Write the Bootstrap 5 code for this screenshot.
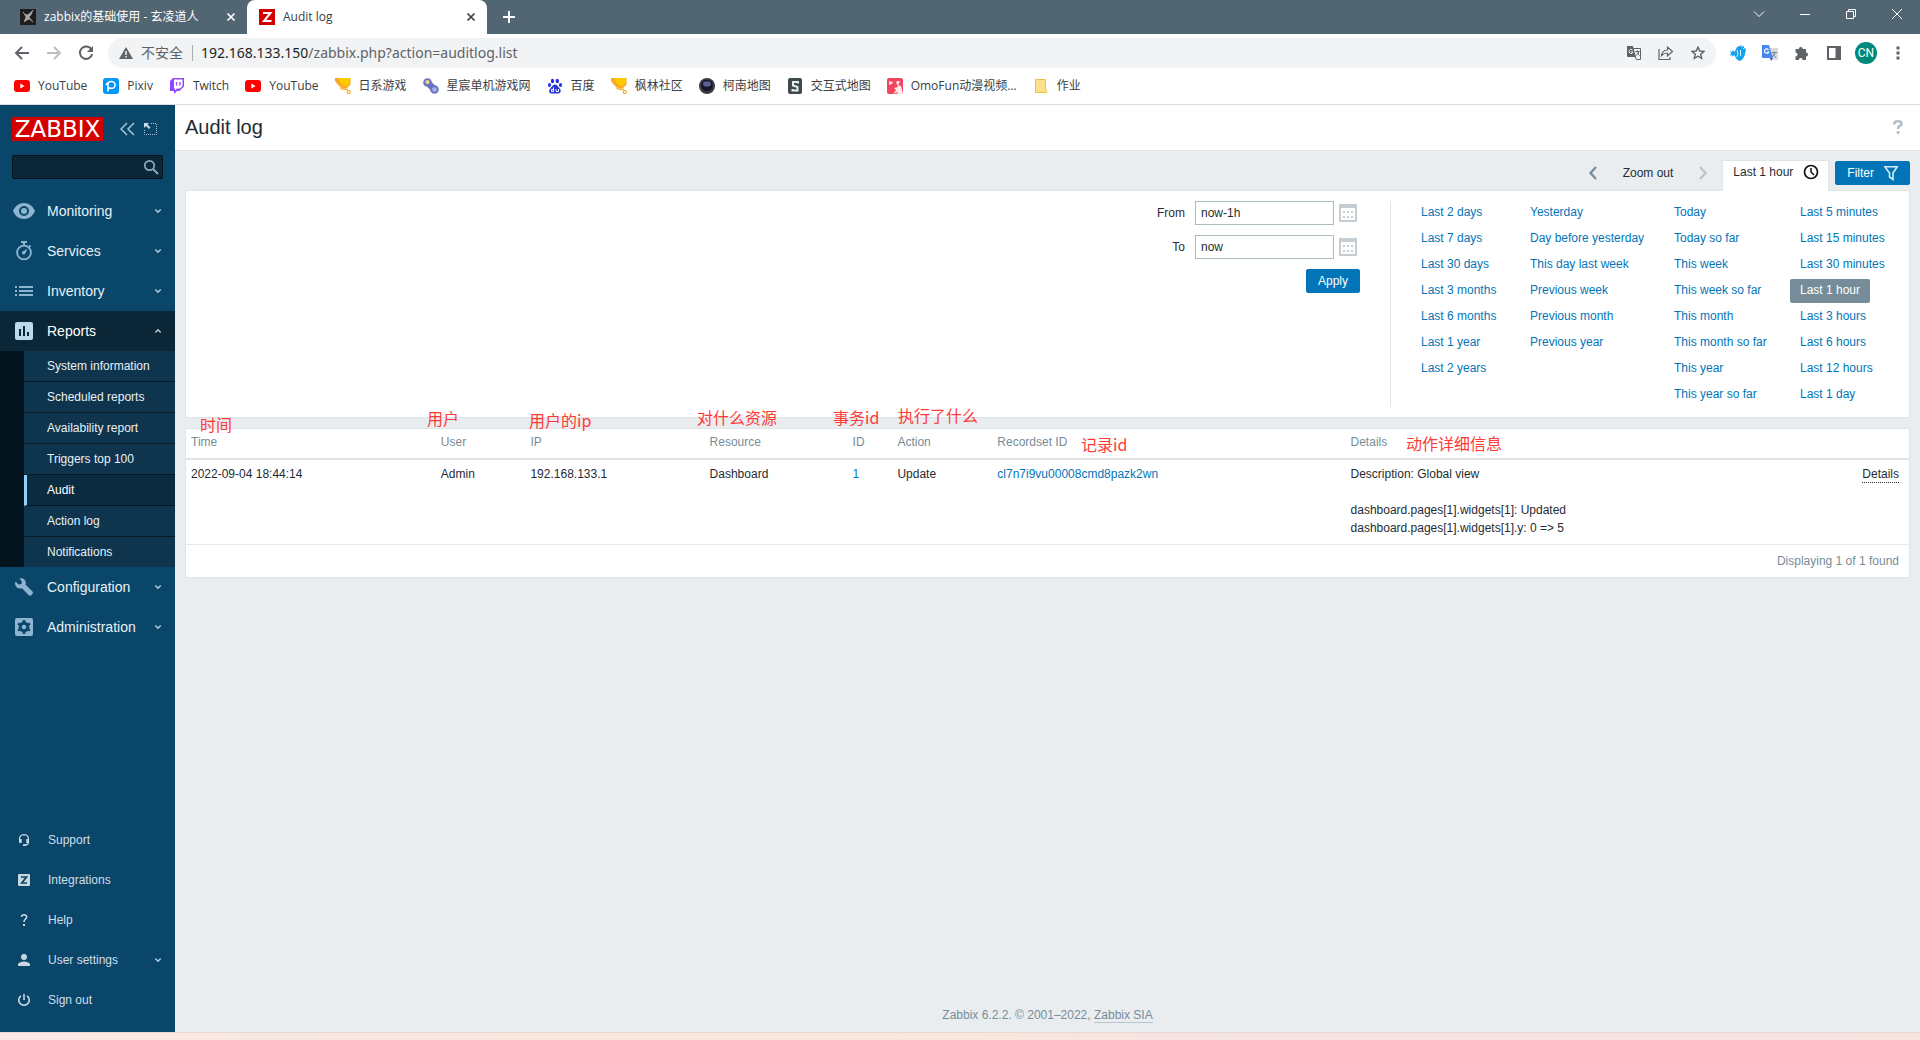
<!DOCTYPE html>
<html lang="en">
<head>
<meta charset="utf-8">
<meta name="viewport" content="width=device-width, initial-scale=1">
<title>Audit log</title>
<link href="https://cdn.jsdelivr.net/npm/bootstrap@5.3.0/dist/css/bootstrap.min.css" rel="stylesheet">
<style>
body{font-family:"Liberation Sans","Noto Sans CJK SC",sans-serif;font-size:12px;line-height:18px;color:#1f2c33;background:#e9edf0}
button{border:0;background:none;padding:0;color:inherit}
svg{display:block;flex:none}
a{text-decoration:none;color:#0275b8}
/* browser frame */
.chrome{font-family:"Open Sans","Noto Sans CJK SC",sans-serif;color:#3c4043;background:#fff;border-bottom:1px solid #dadce0}
.tabstrip{height:34px;background:#516672;color:#fff}
.tab-item{height:34px;padding:0 11px 0 12px;gap:8px}
.tab-idle{width:239px;margin-left:8px}
.tab-active{width:240px;background:#fff;color:#3c4043;border-radius:8px 8px 0 0}
.new-tab{padding:0 0 0 14px}
.window-ctl{width:46px;height:28px}
.toolbar{height:38px;padding:0 6px}
.tool-btn{width:32px;height:32px}
.omnibox{height:30px;margin:0 6px;padding:0 2px 0 11px;border-radius:15px;background:#f1f3f4;font-family:"Noto Sans","Noto Sans CJK SC",sans-serif;font-size:14px;color:#5f6368}
.omni-sep{width:1px;height:16px;background:#a9adb1;margin:0 8px 0 9px}
.avatar-dot{width:22px;height:22px;border-radius:50%;background:#00897b;color:#fff;font:12px Roboto,sans-serif}
.bookmarks{height:32px;padding:0 14px 4px;gap:16px}
.bookmarks a{color:#3c4043;gap:8px}
/* sidebar */
.sidebar{width:175px;background:#0a466a;color:#e6eef3}
.brand{padding:12px 17px 0 12px;gap:17px}
.logo{width:91px;height:24px;background:#d40000;color:#fff;font:23px/24px "DejaVu Sans",sans-serif;text-align:center}
.search-box{margin:14px 12px 12px;height:24px;background:#0a2637;border:1px solid #04121b;border-radius:2px;padding:0 3px 0 6px}
.search-box input{background:none;border:0;min-width:0;color:#fff;outline:0}
.side-link{height:40px;padding:0 13px 0 12px;font-size:14px;color:#e8f1f6}
.side-link .ico{width:24px;margin-right:11px;color:#8eb5d0}
.side-link.open{background:#0a2637;color:#fff}
.side-link.open .ico{color:#bcd9ec}
.side-link .chev{color:#b5ccd9}
.side-foot .side-link{font-size:12px;color:#d0dfe7}
.side-foot .ico{margin-right:12px;color:#c7d8e1}
.side-foot{padding-bottom:12px}
.submenu{background:#04141e;padding-left:24px}
.submenu a{height:31px;line-height:30px;padding-left:23px;color:#e8f1f6;background:#0f344d;border-bottom:1px solid #051925}
.submenu a.on{background:#0a2b40;border-left:3px solid #90d0ff;padding-left:20px;color:#fff}
.submenu a:last-child{height:30px;border-bottom:0}
/* content */
.page-head{height:46px;padding:0 16px 2px 10px;border-bottom:1px solid #dfe4e7;background:#fff}
.page-head h1{font-size:20px;line-height:24px;font-weight:400;margin:0}
.work{padding:9px 10px 0}
.pager{height:30px;padding-bottom:4px;gap:25px;margin-right:14px}
.time-tab{height:31px;width:107px;padding:0 9px 8px 10px;background:#fff;border:1px solid #dfe4e7;border-bottom:0;margin-bottom:-1px;position:relative;z-index:1}
.filter-btn{margin:1px 0 0 6px;gap:10px}
.btn-z{height:24px;line-height:22px;padding:0 11px;font-size:12px;border-radius:2px;color:#fff;background:#0275b8;border:1px solid #0275b8}
.btn-z:hover{color:#fff;background:#02659f}
.panel{background:#fff;border:1px solid #dfe4e7}
.filter-panel{padding:10px;gap:20px}
.range-form{padding-right:30px;border-right:1px solid #dfe4e7}
.range-row{gap:5px;margin-bottom:10px}
.range-row label{margin-right:5px}
.range-row input{width:139px;height:24px;border:1px solid #acbbc2;padding:0 5px;color:#1f2c33}
.range-row button{width:21px}
.quick-grid{display:grid;grid-template-columns:109px 144px 126px 109px;white-space:nowrap}
.quick{gap:2px}
.quick a{height:24px;line-height:23px;padding:0 10px;border-radius:2px}
.quick a.on{background:#768d99;color:#fff}
.audit{margin-top:10px;position:relative}
.audit table{table-layout:fixed;width:100%;border-collapse:separate;border-spacing:0}
.audit th{font-weight:400;color:#768d99;padding:4px 5px 7px;height:31px;border-bottom:2px solid #dfe4e7}
.audit td{padding:5px 5px 7px;height:85px;vertical-align:top;border-bottom:1px solid #e5e9ec}
.audit th:last-child,.audit td:last-child{padding-right:10px;text-align:right}
.details-btn{border-bottom:1px dotted #1f2c33;line-height:15px}
.found{padding:7px 10px;color:#768d99;text-align:right}
.note{position:absolute;font:16px/20px "Noto Sans CJK SC",sans-serif;color:#ff3b38;white-space:nowrap}
.page-foot{color:#768d99;padding-bottom:8px}
.page-foot a{color:#768d99;border-bottom:1px solid #b9c5cc}
.desk{height:8px;border-top:1px solid #e8d8d0;background:linear-gradient(90deg,#f8e7e4,#f8e8dc 48%,#f5e3e4 65%,#f7e4e1)}
</style>
</head>
<body class="d-flex flex-column min-vh-100">
<svg class="d-none">
<symbol id="i-yt" viewBox="0 0 16 16"><rect y="2" width="16" height="12" rx="3" fill="#f00"/><path d="M6.3 5.500v5L10.600 8z" fill="#fff"/></symbol>
<symbol id="i-cup" viewBox="0 0 16 16"><path d="M0 0h15.500v6.500L12 10q-1.500 1-3.500.5Q4 9 0 3z" fill="#f9a825"/><path d="M3.500 0h11v5.500L11 8.500Q6 8 3.500 0z" fill="#ffca00"/><path d="M5 9.500Q8 12.500 13 11" fill="none" stroke="#f7b84a" stroke-width="1.600"/><circle cx="13.700" cy="14" r="1.500" fill="none" stroke="#f9a825" stroke-width="1.200"/></symbol>
<symbol id="i-close" viewBox="0 0 10 10"><path d="M1.500 1.500l7 7m0-7l-7 7" stroke="currentColor" stroke-width="1.700"/></symbol>
<symbol id="i-down" viewBox="0 0 8 8"><path d="M1.300 2.500L4 5.200l2.700-2.700" fill="none" stroke="currentColor" stroke-width="1.500"/></symbol>
<symbol id="i-cal" viewBox="0 0 18 18"><path fill-rule="evenodd" d="M1 0h16a1 1 0 0 1 1 1v16a1 1 0 0 1-1 1H1a1 1 0 0 1-1-1V1a1 1 0 0 1 1-1zm1 4v12h14V4z" fill="#c3cdd2"/><path d="M4 7h2v2H4zm4 0h2v2H8zm4 0h2v2h-2zM4 12h2v2H4zm4 0h2v2H8zm4 0h2v2h-2z" fill="#c3cdd2"/></symbol>
</svg>

<header class="chrome">
  <div class="tabstrip d-flex">
    <div class="tab-item tab-idle d-flex align-items-center">
      <svg width="16" height="16" viewBox="0 0 16 16"><rect width="16" height="16" fill="#1d1d1d"/><path d="M3 3l3 3 3-1 4-4-2 5-2 2 4 5-4-3-5 3 2-5z" fill="#a9a9a9" stroke="#a9a9a9" stroke-width=".6"/></svg>
      <span class="flex-grow-1 text-nowrap">zabbix的基础使用 - 玄凌道人</span>
      <button aria-label="Close tab"><svg width="10" height="10"><use href="#i-close"/></svg></button>
    </div>
    <div class="tab-item tab-active d-flex align-items-center">
      <svg width="16" height="16" viewBox="0 0 16 16"><rect width="16" height="16" fill="#d40000"/><path d="M4 4h7.500L5 12h7.500" fill="none" stroke="#fff" stroke-width="2"/></svg>
      <span class="flex-grow-1">Audit log</span>
      <button aria-label="Close tab"><svg width="10" height="10"><use href="#i-close"/></svg></button>
    </div>
    <button class="new-tab" aria-label="New tab"><svg width="16" height="16" viewBox="0 0 16 16"><path d="M8 2v12M2 8h12" stroke="#fff" stroke-width="2"/></svg></button>
    <div class="ms-auto d-flex">
      <button class="window-ctl d-flex align-items-center justify-content-center" aria-label="Search tabs"><svg width="12" height="12" viewBox="0 0 12 12"><path d="M1 3.500l5 5 5-5" fill="none" stroke="#fff"/></svg></button>
      <button class="window-ctl d-flex align-items-center justify-content-center" aria-label="Minimize"><svg width="10" height="10" viewBox="0 0 10 10"><path d="M0 5.500h10" stroke="#fff"/></svg></button>
      <button class="window-ctl d-flex align-items-center justify-content-center" aria-label="Restore"><svg width="10" height="10" viewBox="0 0 10 10"><path d="M.5 2.500h7v7h-7zM2.500 2.500v-2h7v7h-2" fill="none" stroke="#fff"/></svg></button>
      <button class="window-ctl d-flex align-items-center justify-content-center" aria-label="Close"><svg width="10" height="10" viewBox="0 0 10 10"><path d="M0 0l10 10M10 0L0 10" stroke="#fff"/></svg></button>
    </div>
  </div>
  <div class="toolbar d-flex align-items-center">
    <button class="tool-btn d-flex align-items-center justify-content-center" aria-label="Back"><svg width="16" height="16" viewBox="0 0 16 16"><path d="M15 8H2m6-6L2 8l6 6" fill="none" stroke="#5f6368" stroke-width="1.900"/></svg></button>
    <button class="tool-btn d-flex align-items-center justify-content-center" aria-label="Forward"><svg width="16" height="16" viewBox="0 0 16 16"><path d="M1 8h13M8 2l6 6-6 6" fill="none" stroke="#bcbfc1" stroke-width="1.900"/></svg></button>
    <button class="tool-btn d-flex align-items-center justify-content-center" aria-label="Reload"><svg width="16" height="16" viewBox="0 0 16 16"><path d="M13.500 4.500A6.200 6.200 0 1 0 14.200 9" fill="none" stroke="#5f6368" stroke-width="2"/><path d="M15 1v6H9z" fill="#5f6368"/></svg></button>
    <div class="omnibox d-flex align-items-center flex-grow-1">
      <svg width="14" height="14" viewBox="0 0 14 14" class="me-2"><path d="M7 1l7 12H0z" fill="#5f6368"/><path d="M7 5v4m0 1v1.500" stroke="#f1f3f4" stroke-width="1.500"/></svg>
      <span>不安全</span><span class="omni-sep"></span>
      <span class="flex-grow-1"><span class="text-dark">192.168.133.150</span>/zabbix.php?action=auditlog.list</span>
      <button class="tool-btn d-flex align-items-center justify-content-center" aria-label="Translate"><svg width="14" height="14" viewBox="0 0 14 14"><path d="M0 0h6l3 11H1q-1 0-1-1z" fill="#5f6368"/><path d="M6.500 2.500h7v11H9.500L8 11" fill="none" stroke="#5f6368"/><path d="M5.500 4A2 2 0 1 0 6 6H4" fill="none" stroke="#f1f3f4"/><path d="M8.500 5.500h4m-2-1v1m1.500 0q-.5 2-3 4m1-3q1 2 2.500 3" fill="none" stroke="#5f6368"/></svg></button>
      <button class="tool-btn d-flex align-items-center justify-content-center" aria-label="Share"><svg width="16" height="16" viewBox="0 0 16 16"><path d="M1 4v10.500h11V12M3.500 10.500Q4.500 5 9.500 5V2l5 4.500-5 4.500V8Q6 8 3.500 10.500z" fill="none" stroke="#5f6368" stroke-width="1.200"/></svg></button>
      <button class="tool-btn d-flex align-items-center justify-content-center" aria-label="Bookmark"><svg width="14" height="14" viewBox="0 0 14 14"><path d="M7 1l1.700 4 4.300.4-3.300 2.800 1 4.200L7 10.200l-3.700 2.200 1-4.200L1 5.400 5.300 5z" fill="none" stroke="#5f6368" stroke-width="1.400"/></svg></button>
    </div>
    <button class="tool-btn d-flex align-items-center justify-content-center" aria-label="Fish extension"><svg width="16" height="16" viewBox="0 0 16 16"><path d="M0 6l2 1 1-2 1.500 2L7 2l5-2-1 2 3-1v2l2 1-1 5q-1 5-5 7-4-1-5-5l-1.500-1L3 12l-1-2-2 1 1-2.500z" fill="#17a2ef"/><path d="M7 5q2 3 0 7M10.500 5v6M13 3.500h1" stroke="#d4f0ff" fill="none"/></svg></button>
    <button class="tool-btn d-flex align-items-center justify-content-center" aria-label="Translate extension"><svg width="16" height="16" viewBox="0 0 16 16"><path d="M6 3h10v12h-5z" fill="#dcdcdc"/><path d="M0 0h7l4 13H1q-1 0-1-1z" fill="#4a86f0"/><path d="M8 13h3l-2 3z" fill="#2a57c8"/><path d="M6.500 4.800A2.200 2.200 0 1 0 6.800 7H5" fill="none" stroke="#fff" stroke-width="1.200"/><path d="M10 7.500h5m-3-1v1m1.500 0q-1 3-3 4m0-3q1 2 3.500 4" fill="none" stroke="#6f8796"/></svg></button>
    <button class="tool-btn d-flex align-items-center justify-content-center" aria-label="Extensions"><svg width="16" height="16" viewBox="0 0 16 16"><path d="M1.500 4h3.300a2 2 0 1 1 4 0H12v3.500a2 2 0 1 1 0 4V15H8.700a2 2 0 0 0-4 0H1.500v-3.500a2 2 0 0 0 0-4z" fill="#5f6368"/></svg></button>
    <button class="tool-btn d-flex align-items-center justify-content-center" aria-label="Side panel"><svg width="14" height="14" viewBox="0 0 14 14"><path fill-rule="evenodd" d="M0 0h14v14H0zm2 2v10h6.500V2z" fill="#5f6368"/></svg></button>
    <button class="tool-btn d-flex align-items-center justify-content-center" aria-label="Profile"><span class="avatar-dot d-flex align-items-center justify-content-center">CN</span></button>
    <button class="tool-btn d-flex align-items-center justify-content-center" aria-label="Menu"><svg width="4" height="14" viewBox="0 0 4 14"><path d="M.5 .5h3v3h-3zm0 5h3v3h-3zm0 5h3v3h-3z" fill="#5f6368"/></svg></button>
  </div>
  <nav class="bookmarks d-flex align-items-center text-nowrap">
    <a href="#" class="d-flex align-items-center"><svg width="16" height="16"><use href="#i-yt"/></svg>YouTube</a>
    <a href="#" class="d-flex align-items-center"><svg width="16" height="16" viewBox="0 0 16 16"><rect width="16" height="16" rx="3" fill="#0096fa"/><path d="M5 13.500V5m-2 2q2-3.500 5.500-3.500a3.500 3.300 0 0 1 0 6.800Q6.500 10.500 5 9.500" fill="none" stroke="#fff" stroke-width="1.600"/></svg>Pixiv</a>
    <a href="#" class="d-flex align-items-center"><svg width="16" height="16" viewBox="0 0 16 16"><path d="M4 0h11v8.500L10.500 13H8l-3 3v-3H1V3z" fill="#9146ff"/><path d="M5 1.500h8.500V8L11 10.500H8l-2 2v-2H5z" fill="#fff"/><path d="M7.500 4v3.500m3.500-3.500v3.500" stroke="#9146ff" stroke-width="1.300"/></svg>Twitch</a>
    <a href="#" class="d-flex align-items-center"><svg width="16" height="16"><use href="#i-yt"/></svg>YouTube</a>
    <a href="#" class="d-flex align-items-center"><svg width="16" height="16"><use href="#i-cup"/></svg>日系游戏</a>
    <a href="#" class="d-flex align-items-center"><svg width="16" height="16" viewBox="0 0 16 16"><path d="M4.500 4.500l7 7" stroke="#6570b8" stroke-width="6.500"/><circle cx="4.500" cy="4.500" r="4.300" fill="#6d76c4"/><circle cx="11.500" cy="11.500" r="4.300" fill="#6d76c4"/><circle cx="4.500" cy="4" r="2" fill="#f0d58a"/><circle cx="11.500" cy="11.500" r="2.200" fill="#a9b4ee"/></svg>星宸单机游戏网</a>
    <a href="#" class="d-flex align-items-center"><svg width="16" height="16" viewBox="0 0 16 16"><g fill="#2932e1"><ellipse cx="5.500" cy="3" rx="1.700" ry="2.300"/><ellipse cx="10.300" cy="3" rx="1.700" ry="2.300"/><ellipse cx="2.500" cy="7" rx="1.600" ry="2"/><ellipse cx="13.500" cy="7" rx="1.600" ry="2"/><path d="M8 6.500q2 0 3 2l2.500 3q1 4-3 4H5q-4 0-2.500-4L5 8.500q1-2 3-2z"/></g><path d="M6.500 9.500v4h-2v-2h2M9 11v2.500h2.500V11" fill="none" stroke="#fff"/></svg>百度</a>
    <a href="#" class="d-flex align-items-center"><svg width="16" height="16"><use href="#i-cup"/></svg>枫林社区</a>
    <a href="#" class="d-flex align-items-center"><svg width="16" height="16" viewBox="0 0 16 16"><circle cx="8" cy="8" r="8" fill="#3b3b42"/><circle cx="8" cy="7.500" r="5.800" fill="#15152e"/><ellipse cx="8" cy="6" rx="4" ry="2.800" fill="#5c5f92"/></svg>柯南地图</a>
    <a href="#" class="d-flex align-items-center"><svg width="16" height="16" viewBox="0 0 16 16"><rect x="1" width="14" height="16" rx="2" fill="#3f4a4d"/><path d="M11 5.500V4H6v3.500l4.500 1.500v3.500H5.500V11" fill="none" stroke="#e8eeee" stroke-width="2"/></svg>交互式地图</a>
    <a href="#" class="d-flex align-items-center"><svg width="16" height="16" viewBox="0 0 16 16"><rect width="16" height="16" rx="2" fill="#f5455c"/><path d="M2 3l4 1-1 2-3 1zM9 4q3-2 4 0l-2 3 3 1 2 8h-6l1-2-5 2 3-4-2-2 4-1z" fill="#ffe8ec"/></svg>OmoFun动漫视频...</a>
    <a href="#" class="d-flex align-items-center"><svg width="16" height="16" viewBox="0 0 16 16"><path d="M2.500 1.500h10v10l1 .5v2.500h-11z" fill="#ffe08a" stroke="#e8c44d"/></svg>作业</a>
  </nav>
</header>

<div class="d-flex flex-grow-1">
  <aside class="sidebar d-flex flex-column flex-shrink-0">
    <div class="brand d-flex align-items-center">
      <div class="logo">ZABBIX</div>
      <div class="d-flex gap-2 align-items-center">
        <button aria-label="Collapse sidebar"><svg width="15" height="14" viewBox="0 0 15 14"><path d="M7 1L1 7l6 6M14 1L8 7l6 6" fill="none" stroke="#a9c6d8" stroke-width="1.500"/></svg></button>
        <button aria-label="Hide sidebar"><svg width="14" height="14" viewBox="0 0 14 14"><path d="M8 1.500h5.500v11h-12V8" fill="none" stroke="#a9c6d8" stroke-dasharray="1 1"/><path d="M1 1h5L4.500 2.500l3 3-1.500 1.500-3-3L1 6z" fill="#c5dbe8"/></svg></button>
      </div>
    </div>
    <form class="search-box d-flex align-items-center">
      <input type="text" class="flex-grow-1" aria-label="Search">
      <button type="button" aria-label="Search"><svg width="16" height="16" viewBox="0 0 16 16"><circle cx="6.500" cy="6.500" r="4.700" fill="none" stroke="#8aaac0" stroke-width="1.700"/><path d="M10 10l5 5" stroke="#8aaac0" stroke-width="2"/></svg></button>
    </form>
    <nav>
      <a href="#" class="side-link d-flex align-items-center"><span class="ico d-flex justify-content-center"><svg width="22" height="16" viewBox="0 0 22 16"><path fill-rule="evenodd" d="M11 0c5 0 9 3 11 8-2 5-6 8-11 8S2 13 0 8c2-5 6-8 11-8zm0 3a5 5 0 1 0 0 10 5 5 0 0 0 0-10z" fill="currentColor"/><circle cx="11" cy="8" r="3" fill="currentColor"/></svg></span><span class="flex-grow-1">Monitoring</span><svg class="chev" width="8" height="8"><use href="#i-down"/></svg></a>
      <a href="#" class="side-link d-flex align-items-center"><span class="ico d-flex justify-content-center"><svg width="18" height="20" viewBox="0 0 18 20"><circle cx="9" cy="11.500" r="6.900" fill="none" stroke="currentColor" stroke-width="1.800"/><path d="M6 1h6M9 1v3m5 .5l1.500 1.500" stroke="currentColor" stroke-width="1.900"/><path d="M12.500 8l-2.300 4.500a1.700 1.700 0 1 1-2.200-2.200z" fill="currentColor"/></svg></span><span class="flex-grow-1">Services</span><svg class="chev" width="8" height="8"><use href="#i-down"/></svg></a>
      <a href="#" class="side-link d-flex align-items-center"><span class="ico d-flex justify-content-center"><svg width="18" height="12" viewBox="0 0 18 12"><path d="M0 1h2v2H0zm4 0h14v2H4zM0 5h2v2H0zm4 0h14v2H4zM0 9h2v2H0zm4 0h14v2H4z" fill="currentColor"/></svg></span><span class="flex-grow-1">Inventory</span><svg class="chev" width="8" height="8"><use href="#i-down"/></svg></a>
      <a href="#" class="side-link open d-flex align-items-center"><span class="ico d-flex justify-content-center"><svg width="18" height="18" viewBox="0 0 18 18"><rect width="18" height="18" rx="2" fill="currentColor"/><path d="M5 7v7m4-10v10m4-4v4" stroke="#0a2637" stroke-width="2"/></svg></span><span class="flex-grow-1">Reports</span><svg class="chev" width="8" height="8" viewBox="0 0 8 8"><path d="M1.300 5.500L4 2.800l2.700 2.700" fill="none" stroke="currentColor" stroke-width="1.500"/></svg></a>
      <div class="submenu">
        <a href="#" class="d-block">System information</a>
        <a href="#" class="d-block">Scheduled reports</a>
        <a href="#" class="d-block">Availability report</a>
        <a href="#" class="d-block">Triggers top 100</a>
        <a href="#" class="d-block on">Audit</a>
        <a href="#" class="d-block">Action log</a>
        <a href="#" class="d-block">Notifications</a>
      </div>
      <a href="#" class="side-link d-flex align-items-center"><span class="ico d-flex justify-content-center"><svg width="18" height="18" viewBox="0 0 18 18"><path d="M4.500 0.500Q9-.5 10.500 3.500q.5 1.500 0 3L18 14l-.5 2-1.500 1.500L14 17.500 7 10.200Q3 11.500 1 8.500-.5 6 .5 3.500l3 3L6.300 6l.7-2.500z" fill="currentColor"/></svg></span><span class="flex-grow-1">Configuration</span><svg class="chev" width="8" height="8"><use href="#i-down"/></svg></a>
      <a href="#" class="side-link d-flex align-items-center"><span class="ico d-flex justify-content-center"><svg width="18" height="18" viewBox="0 0 18 18"><rect width="18" height="18" rx="2" fill="currentColor"/><circle cx="9" cy="9" r="3.800" fill="none" stroke="#0a466a" stroke-width="3.200"/><path d="M9 2v14M3 5.500l12 7M3 12.500l12-7" stroke="#0a466a" stroke-width="2.600"/><circle cx="9" cy="9" r="2.300" fill="currentColor"/></svg></span><span class="flex-grow-1">Administration</span><svg class="chev" width="8" height="8"><use href="#i-down"/></svg></a>
    </nav>
    <nav class="side-foot mt-auto">
      <a href="#" class="side-link d-flex align-items-center"><span class="ico d-flex justify-content-center"><svg width="12" height="12" viewBox="0 0 12 12"><path d="M1.500 6V5q0-4 4.500-4.300Q10.500 1 10.500 5v3q0 3-4 3.200" fill="none" stroke="currentColor" stroke-width="1.200"/><path d="M1 5h2.700v4H2Q1 9 1 8zm7.300 0H11v4H8.300zM5 10.300h3V12H5z" fill="currentColor"/></svg></span>Support</a>
      <a href="#" class="side-link d-flex align-items-center"><span class="ico d-flex justify-content-center"><svg width="12" height="12" viewBox="0 0 12 12"><rect width="12" height="12" rx="1" fill="currentColor"/><path d="M3 3h5.500L3.800 9H9" fill="none" stroke="#0a466a" stroke-width="1.700"/></svg></span>Integrations</a>
      <a href="#" class="side-link d-flex align-items-center"><span class="ico d-flex justify-content-center"><svg width="12" height="12" viewBox="0 0 12 12"><path d="M3.500 3Q3.700.8 6 .8T8.700 3Q8.700 4.300 7.200 5.300 6 6 6 8" fill="none" stroke="currentColor" stroke-width="1.500"/><path d="M5 10h2v2H5z" fill="currentColor"/></svg></span>Help</a>
      <a href="#" class="side-link d-flex align-items-center"><span class="ico d-flex justify-content-center"><svg width="12" height="12" viewBox="0 0 12 12"><circle cx="6" cy="3" r="3" fill="currentColor"/><path d="M0 12v-2q1.500-2.500 6-2.500t6 2.500v2z" fill="currentColor"/></svg></span><span class="flex-grow-1">User settings</span><svg class="chev" width="8" height="8"><use href="#i-down"/></svg></a>
      <a href="#" class="side-link d-flex align-items-center"><span class="ico d-flex justify-content-center"><svg width="12" height="12" viewBox="0 0 12 12"><path d="M3 1.800a5.200 5.200 0 1 0 6 0M6 0v6" fill="none" stroke="currentColor" stroke-width="1.600"/></svg></span>Sign out</a>
    </nav>
  </aside>

  <main class="flex-grow-1 d-flex flex-column">
    <div class="page-head d-flex align-items-center justify-content-between">
      <h1>Audit log</h1>
      <a href="#" aria-label="Help"><svg width="12" height="14" viewBox="0 0 12 14"><path d="M2.500 4.500V3Q2.500 1.300 6 1.300T9.500 3.500Q9.500 5 7.500 6 6 6.700 6 9" fill="none" stroke="#b4c0c7" stroke-width="2.600"/><path d="M4.700 11h2.800v3H4.700z" fill="#b4c0c7"/></svg></a>
    </div>
    <div class="work">
      <div class="d-flex justify-content-end align-items-start">
        <div class="pager d-flex align-items-center">
          <button aria-label="Earlier"><svg width="10" height="14" viewBox="0 0 10 14"><path d="M8 1L2.500 7 8 13" fill="none" stroke="#768d99" stroke-width="2.300"/></svg></button>
          <button>Zoom out</button>
          <button aria-label="Later" disabled><svg width="10" height="14" viewBox="0 0 10 14"><path d="M2 1l5.500 6L2 13" fill="none" stroke="#b9c5cc" stroke-width="2.300"/></svg></button>
        </div>
        <a href="#" class="time-tab text-reset d-flex align-items-center justify-content-between">Last 1 hour<svg width="16" height="16" viewBox="0 0 16 16"><circle cx="8" cy="8" r="6.500" fill="none" stroke="#111" stroke-width="1.700"/><path d="M8 4v4l3 3" fill="none" stroke="#111" stroke-width="1.500"/></svg></a>
        <button class="btn-z filter-btn d-flex align-items-center">Filter<svg width="14" height="16" viewBox="0 0 14 16"><path d="M.8 1.800h12.400L9 8v6.500L5.500 12V8z" fill="none" stroke="#d8eaf5" stroke-width="1.600"/></svg></button>
      </div>
      <section class="panel filter-panel d-flex justify-content-end">
        <form class="range-form">
          <div class="range-row d-flex align-items-center justify-content-end"><label for="from">From</label><input id="from" type="text" value="now-1h"><button type="button" aria-label="Pick start date"><svg width="18" height="18"><use href="#i-cal"/></svg></button></div>
          <div class="range-row d-flex align-items-center justify-content-end"><label for="to">To</label><input id="to" type="text" value="now"><button type="button" aria-label="Pick end date"><svg width="18" height="18"><use href="#i-cal"/></svg></button></div>
          <div class="d-flex justify-content-end"><button type="button" class="btn-z">Apply</button></div>
        </form>
        <div class="quick-grid">
          <div class="quick d-flex flex-column align-items-start"><a href="#">Last 2 days</a><a href="#">Last 7 days</a><a href="#">Last 30 days</a><a href="#">Last 3 months</a><a href="#">Last 6 months</a><a href="#">Last 1 year</a><a href="#">Last 2 years</a></div>
          <div class="quick d-flex flex-column align-items-start"><a href="#">Yesterday</a><a href="#">Day before yesterday</a><a href="#">This day last week</a><a href="#">Previous week</a><a href="#">Previous month</a><a href="#">Previous year</a></div>
          <div class="quick d-flex flex-column align-items-start"><a href="#">Today</a><a href="#">Today so far</a><a href="#">This week</a><a href="#">This week so far</a><a href="#">This month</a><a href="#">This month so far</a><a href="#">This year</a><a href="#">This year so far</a></div>
          <div class="quick d-flex flex-column align-items-start"><a href="#">Last 5 minutes</a><a href="#">Last 15 minutes</a><a href="#">Last 30 minutes</a><a href="#" class="on">Last 1 hour</a><a href="#">Last 3 hours</a><a href="#">Last 6 hours</a><a href="#">Last 12 hours</a><a href="#">Last 1 day</a></div>
        </div>
      </section>
      <section class="panel audit">
        <table>
          <colgroup><col style="width:14.5%"><col style="width:5.2%"><col style="width:10.4%"><col style="width:8.3%"><col style="width:2.6%"><col style="width:5.8%"><col style="width:20.5%"><col><col style="width:5%"></colgroup>
          <thead><tr><th>Time</th><th>User</th><th>IP</th><th>Resource</th><th>ID</th><th>Action</th><th>Recordset ID</th><th>Details</th><th></th></tr></thead>
          <tbody><tr><td>2022-09-04 18:44:14</td><td>Admin</td><td>192.168.133.1</td><td>Dashboard</td><td><a href="#">1</a></td><td>Update</td><td><a href="#">cl7n7i9vu00008cmd8pazk2wn</a></td><td>Description: Global view<br><br>dashboard.pages[1].widgets[1]: Updated<br>dashboard.pages[1].widgets[1].y: 0 =&gt; 5</td><td><button class="details-btn">Details</button></td></tr></tbody>
        </table>
        <div class="found">Displaying 1 of 1 found</div>
        <!-- red remarks laid over the column heads -->
        <span class="note" style="left:14px;top:-15px">时间</span>
        <span class="note" style="left:241px;top:-21px">用户</span>
        <span class="note" style="left:343px;top:-19px">用户的ip</span>
        <span class="note" style="left:511px;top:-22px">对什么资源</span>
        <span class="note" style="left:647px;top:-22px">事务id</span>
        <span class="note" style="left:712px;top:-24px">执行了什么</span>
        <span class="note" style="left:895px;top:5px">记录id</span>
        <span class="note" style="left:1220px;top:4px">动作详细信息</span>
      </section>
    </div>
    <footer class="page-foot mt-auto text-center">Zabbix 6.2.2. © 2001–2022, <a href="#">Zabbix SIA</a></footer>
  </main>
</div>
<div class="desk"></div>
<script src="https://cdn.jsdelivr.net/npm/bootstrap@5.3.0/dist/js/bootstrap.bundle.min.js"></script>
</body>
</html>
